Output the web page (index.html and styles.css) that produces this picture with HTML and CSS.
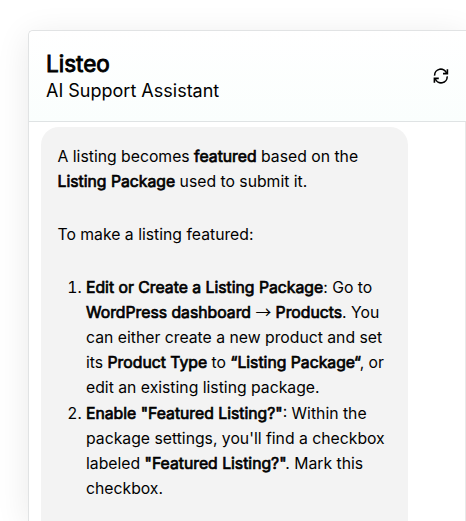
FILE: index.html
```html
<!DOCTYPE html>
<html lang="en">
  <head>
    <meta charset="utf-8">
    <title>Listeo AI Support Assistant</title>
    <link rel="stylesheet" href="styles.css">
  </head>
  <body>
    <div class="chat">
      <div class="chat-header">
        <div>
          <h1>Listeo</h1>
          <p class="subtitle">AI Support Assistant</p>
        </div>
        <button class="refresh" aria-label="Restart chat">
          <svg width="16" height="16" viewBox="0 0 16 16" fill="none" stroke="currentColor" stroke-width="1.6">
            <path d="M1.6 7.6A6.2 6.2 0 0 1 13.6 5.2M14.2 8.4A6.2 6.2 0 0 1 2.2 10.8"/>
            <path d="M14.4 1.2v4.4h-4.4M1.4 14.8v-4.4h4.4"/>
          </svg>
        </button>
      </div>
      <div class="messages">
        <div class="message">
          <p>A listing becomes <b>featured</b> based on the <b>Listing Package</b> used to submit it.</p>
          <p>To make a listing featured:</p>
          <ol>
            <li><b>Edit or Create a Listing Package</b>: Go to <b>WordPress dashboard <span class="arrow">→</span> Products</b>. You can either create a new product and set its <b>Product Type</b> to <b>“Listing Package“</b>, or edit an existing listing package.</li>
            <li><b>Enable "Featured Listing?"</b>: Within the package settings, you'll find a checkbox labeled <b>"Featured Listing?"</b>. Mark this checkbox.</li>
          </ol>
        </div>
      </div>
    </div>
  </body>
</html>
```

FILE: styles.css
```css
body{
  display: flex;
  margin: 0;
  padding: 30px 0 0 28px;
  height: 521px;
  box-sizing: border-box;
  overflow: hidden;
  background: #fff;
  color: #000;
  font-family: Inter, sans-serif;
}
.chat{
  display: flex;
  flex-direction: column;
  flex: 1;
  box-sizing: border-box;
  border: 1px solid #e1e3e4;
  border-right: 0;
  border-bottom: 0;
  border-radius: 5px 0 0 0;
  background: #fff;
  box-shadow: 0 6px 34px rgba(0,0,0,0.09);
}
.chat-header{
  display: flex;
  align-items: center;
  justify-content: space-between;
  box-sizing: border-box;
  height: 91px;
  padding: 0 17px 0 17px;
  border-bottom: 1px solid #dfe3e4;
  border-radius: 5px 0 0 0;
  background: linear-gradient(#fff, #fafefd);
}
h1{
  margin: 0;
  font-size: 22.5px;
  line-height: 28px;
  font-weight: 400;
  -webkit-text-stroke: 0.9px #000;
}
.subtitle{
  margin: 0;
  font-size: 18px;
  line-height: 25px;
}
.refresh{
  display: flex;
  padding: 0;
  border: 0;
  background: none;
  color: #000;
}
.messages{
  display: flex;
  flex: 1;
  padding: 5px 12px 0;
  border-right: 1px solid #e8e8e8;
}
.message{
  box-sizing: border-box;
  width: 367px;
  padding: 17px 16px 0 16.5px;
  border-radius: 18px 18px 0 0;
  background: #f3f3f3;
  font-size: 15.75px;
  line-height: 25.15px;
}
.message p{
  margin: 0 0 27.7px;
}
.message ol{
  margin: 0;
  padding-left: 28.5px;
}
b{
  font-weight: 400;
  -webkit-text-stroke: 0.7px #000;
}
.arrow{
  font-family: "Noto Sans CJK SC", sans-serif;
  line-height: 1;
  -webkit-text-stroke: 0;
}
```
